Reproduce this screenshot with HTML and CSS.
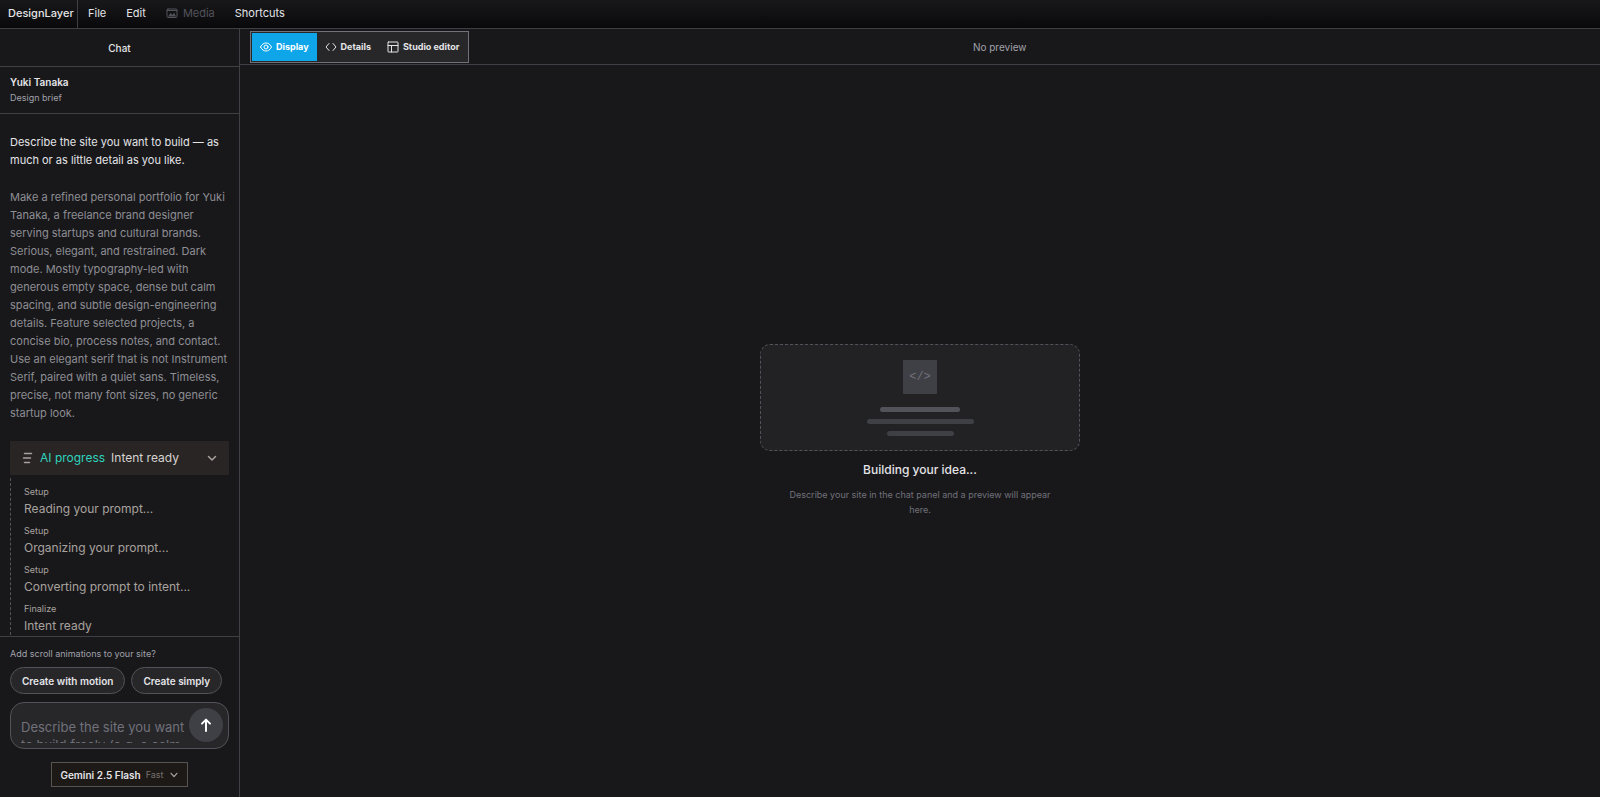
FILE: index.html
```
<!DOCTYPE html>
<html lang="en">
<head>
    <meta charset="UTF-8">
    <meta name="viewport" content="width=device-width, initial-scale=1.0">
    <title>DesignLayer</title>
    <link rel="stylesheet" href="styles.css">
</head>
<body>
    <div class="app">
        <!-- Menu bar -->
        <header class="menubar">
            <div class="brand">DesignLayer</div>
            <nav class="menu">
                <button type="button">File</button>
                <button type="button">Edit</button>
                <button type="button" disabled>
                    <svg class="icon" viewBox="0 0 24 24"><rect x="2" y="4" width="20" height="17" rx="2"/><path d="M2 7h20"/><path fill="currentColor" stroke="none" d="M4 19l5-7 4 4 3-5 4 8z"/></svg>
                    Media
                </button>
                <button type="button">Shortcuts</button>
            </nav>
        </header>

        <div class="workspace">
            <!-- Chat panel -->
            <aside class="sidebar">
                <h2 class="sidebar-title">Chat</h2>
                <div class="project">
                    <h1>Yuki Tanaka</h1>
                    <p>Design brief</p>
                </div>

                <div class="messages">
                    <p class="message assistant">Describe the site you want to build — as much or as little detail as you like.</p>
                    <p class="message user">Make a refined personal portfolio for Yuki Tanaka, a freelance brand designer serving startups and cultural brands. Serious, elegant, and restrained. Dark mode. Mostly typography-led with generous empty space, dense but calm spacing, and subtle design-engineering details. Feature selected projects, a concise bio, process notes, and contact. Use an elegant serif that is not Instrument Serif, paired with a quiet sans. Timeless, precise, not many font sizes, no generic startup look.</p>

                    <button type="button" class="progress-toggle" aria-expanded="true">
                        <svg class="icon" viewBox="0 0 24 24"><path d="M5 3h14M3 12h14M5 21h10"/></svg>
                        <span class="progress-label">AI progress</span>
                        <span>Intent ready</span>
                        <svg class="icon chevron" viewBox="0 0 24 24"><path d="M5 9l7 7 7-7"/></svg>
                    </button>
                    <ol class="steps">
                        <li><small>Setup</small>Reading your prompt...</li>
                        <li><small>Setup</small>Organizing your prompt...</li>
                        <li><small>Setup</small>Converting prompt to intent...</li>
                        <li><small>Finalize</small>Intent ready</li>
                    </ol>
                </div>

                <div class="composer">
                    <p class="question">Add scroll animations to your site?</p>
                    <div class="choices">
                        <button type="button">Create with motion</button>
                        <button type="button">Create simply</button>
                    </div>
                    <form class="prompt">
                        <textarea aria-label="Message" placeholder="Describe the site you want to build freely (e.g. a calm portfolio)"></textarea>
                        <button type="button" class="send" aria-label="Send">
                            <svg viewBox="0 0 24 24"><path d="M12 21V4M6 10l6-6 6 6"/></svg>
                        </button>
                    </form>
                    <button type="button" class="model">
                        Gemini 2.5 Flash <span>Fast</span>
                        <svg class="icon" viewBox="0 0 24 24"><path d="M5 8l7 8 7-8"/></svg>
                    </button>
                </div>
            </aside>

            <!-- Preview -->
            <main class="preview">
                <div class="toolbar">
                    <div class="tabs">
                        <button type="button" class="active">
                            <svg class="icon" viewBox="0 0 24 24"><path d="M1 12c3-6 7-8 11-8s8 2 11 8c-3 6-7 8-11 8s-8-2-11-8z"/><circle cx="12" cy="12" r="4"/></svg>
                            Display
                        </button>
                        <button type="button">
                            <svg class="icon" viewBox="0 0 24 24"><path d="M8 5l-6 7 6 7M16 5l6 7-6 7"/></svg>
                            Details
                        </button>
                        <button type="button">
                            <svg class="icon" viewBox="0 0 24 24"><rect x="2" y="2" width="20" height="20" rx="1"/><path d="M2 9h20M9 9v13"/></svg>
                            Studio editor
                        </button>
                    </div>
                    <p class="status">No preview</p>
                </div>

                <div class="canvas">
                    <div class="empty">
                        <div class="placeholder">
                            <div class="code">&lt;/&gt;</div>
                            <div class="bar"></div>
                            <div class="bar wide"></div>
                            <div class="bar narrow"></div>
                        </div>
                        <h3>Building your idea...</h3>
                        <p>Describe your site in the chat panel and a preview will appear here.</p>
                    </div>
                </div>
            </main>
        </div>
    </div>
</body>
</html>
```
FILE: styles.css
```
* {
    box-sizing: border-box;
    margin: 0;
    padding: 0;
}

body {
    background: #18181b;
    color: #e4e4e7;
    font-family: Inter, "Liberation Sans", sans-serif;
    font-size: 11px;
    line-height: 18px;
}

button {
    border: none;
    background: none;
    color: inherit;
    font: inherit;
    cursor: pointer;
}

svg {
    fill: none;
    stroke: currentColor;
    stroke-width: 3;
    stroke-linecap: round;
    stroke-linejoin: round;
}

.icon {
    width: 12px;
    height: 12px;
    flex-shrink: 0;
}

.app {
    display: flex;
    flex-direction: column;
    height: 100vh;
}

/* Menu bar */
.menubar {
    display: flex;
    height: 29px;
    flex-shrink: 0;
    background: linear-gradient(#18181b, #09090b);
    border-bottom: 1px solid #3f3f46;
    line-height: 26px;
}

.brand {
    width: 78px;
    padding-left: 8px;
    border-right: 1px solid #3f3f46;
    font-weight: 500;
}

.menu {
    display: flex;
}

.menu button {
    display: flex;
    align-items: center;
    gap: 5px;
    height: 26px;
    padding: 0 10px;
}

.menu button:disabled {
    color: #52525b;
    cursor: default;
}

.menu .icon {
    stroke-width: 2;
}

.workspace {
    display: flex;
    flex: 1;
    min-height: 0;
}

/* Chat panel */
.sidebar {
    display: flex;
    flex-direction: column;
    width: 240px;
    flex-shrink: 0;
    border-right: 1px solid #3f3f46;
}

.sidebar-title {
    padding: 10px 10px 9px;
    border-bottom: 1px solid #3f3f46;
    font-size: 10px;
    font-weight: 500;
    text-align: center;
}

.project {
    padding: 7px 10px;
    border-bottom: 1px solid #3f3f46;
    line-height: 16px;
}

.project h1 {
    font-size: 10px;
    font-weight: 600;
}

.project p {
    color: #a1a1aa;
    font-size: 9px;
}

.messages {
    flex: 1;
    min-height: 0;
    padding: 19px 10px 0;
    overflow: hidden;
}

.message {
    margin-bottom: 19px;
}

.user {
    color: #8e8e93;
}

.progress-toggle {
    display: flex;
    align-items: center;
    gap: 6px;
    width: 100%;
    height: 34px;
    padding: 0 11px 0 12px;
    background: #292524;
    color: #d6d3d1;
    font-size: 12px;
}

.progress-toggle .icon {
    color: #a8a29e;
}

.progress-label {
    color: #2dd4bf;
}

.chevron {
    margin-left: auto;
}

.steps {
    margin-top: 3px;
    padding: 6px 0 0 13px;
    border-left: 1px dashed #57534e;
    color: #a8a29e;
    font-size: 12px;
    list-style: none;
}

.steps li {
    margin-bottom: 5px;
}

.steps small {
    display: block;
    font-size: 9px;
    line-height: 16px;
}

.composer {
    display: flex;
    flex-direction: column;
    padding: 8px 10px 10px;
    border-top: 1px solid #3f3f46;
}

.question {
    color: #a1a1aa;
    font-size: 9px;
}

.choices {
    display: flex;
    gap: 6px;
    margin: 4px 0 8px;
}

.choices button {
    height: 27px;
    padding: 0 11px;
    border: 1px solid #52525b;
    border-radius: 14px;
    background: #27272a;
    font-size: 10px;
    font-weight: 600;
}

.prompt {
    display: flex;
    height: 47px;
    padding: 5px;
    border: 1px solid #52525b;
    border-radius: 14px;
    background: #27272a;
}

.prompt textarea {
    flex: 1;
    min-width: 0;
    margin: 0 0 0 5px;
    padding-top: 10px;
    border: none;
    outline: none;
    background: none;
    color: inherit;
    font: inherit;
    font-size: 13px;
    line-height: 18px;
    resize: none;
    overflow: hidden;
}

.prompt textarea::placeholder {
    color: #71717a;
}

.send {
    display: flex;
    align-items: center;
    justify-content: center;
    width: 34px;
    height: 34px;
    border-radius: 50%;
    background: #3f3f46;
    color: #fff;
}

.send svg {
    width: 16px;
    height: 16px;
}

.model {
    display: flex;
    align-items: center;
    align-self: center;
    gap: 5px;
    height: 25px;
    margin-top: 13px;
    padding: 0 8px;
    border: 1px solid #57534e;
    background: #1c1917;
    font-size: 10px;
    font-weight: 600;
}

.model span {
    color: #78716c;
    font-size: 9px;
    font-weight: 400;
}

.model .icon {
    width: 10px;
    height: 10px;
    color: #a8a29e;
}

/* Preview */
.preview {
    display: flex;
    flex: 1;
    flex-direction: column;
    min-width: 0;
}

.toolbar {
    display: flex;
    align-items: center;
    height: 36px;
    flex-shrink: 0;
    padding: 0 70px 0 10px;
    border-bottom: 1px solid #3f3f46;
}

.tabs {
    display: flex;
    padding: 1px;
    border: 1px solid #71717a;
    background: #27272a;
    font-size: 9px;
    font-weight: 700;
}

.tabs button {
    display: flex;
    align-items: center;
    gap: 4px;
    height: 28px;
    padding: 0 8px;
}

.tabs .icon {
    stroke-width: 2;
}

.tabs .active {
    background: #0ea5e9;
    color: #fff;
}

.status {
    flex: 1;
    color: #a1a1aa;
    font-size: 10px;
    text-align: center;
}

.canvas {
    display: flex;
    flex: 1;
    align-items: center;
    justify-content: center;
    padding-bottom: 2px;
}

.empty {
    width: 320px;
    text-align: center;
}

.placeholder {
    display: flex;
    flex-direction: column;
    align-items: center;
    gap: 7px;
    height: 107px;
    padding-top: 15px;
    border: 1px dashed #52525b;
    border-radius: 10px;
    background: #222225;
}

.code {
    width: 34px;
    height: 34px;
    margin-bottom: 6px;
    background: #3f3f46;
    color: #71717a;
    font-family: "Liberation Mono", monospace;
    font-size: 12px;
    line-height: 34px;
}

.bar {
    width: 80px;
    height: 5px;
    border-radius: 3px;
    background: #52525b;
}

.wide {
    width: 107px;
    background: #3f3f46;
}

.narrow {
    width: 67px;
    background: #3f3f46;
}

.empty h3 {
    margin: 10px 0 8px;
    font-size: 12px;
    font-weight: 500;
}

.empty p {
    padding: 0 24px;
    color: #71717a;
    font-size: 9px;
    line-height: 15px;
}
```
